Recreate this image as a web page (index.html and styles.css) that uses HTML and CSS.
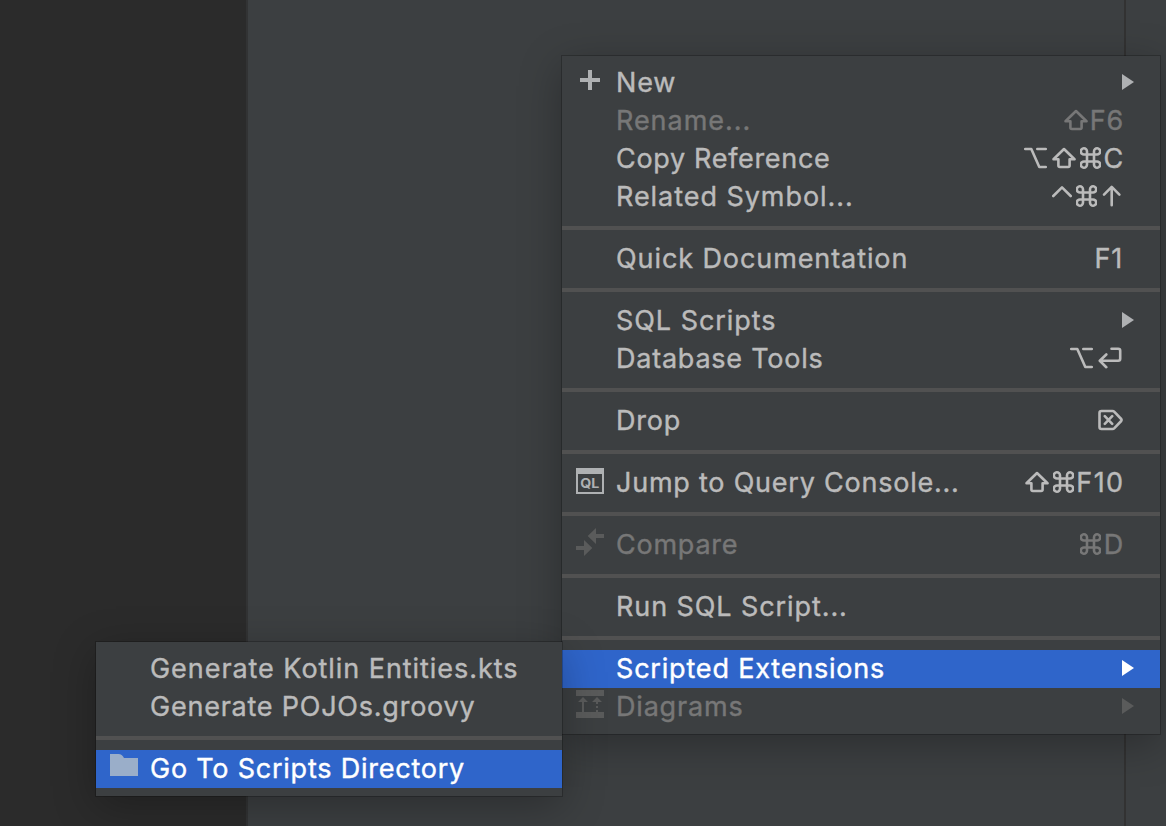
FILE: index.html
```html
<!DOCTYPE html>
<html lang="en">
<head>
<meta charset="utf-8">
<title>Database context menu</title>
<link rel="stylesheet" href="styles.css">
</head>
<body>
<svg class="defs" width="0" height="0" aria-hidden="true">
  <symbol id="shift" viewBox="0 0 24 22"><path d="M12 2 22.5 12.3H17.6V18.5Q17.6 20 16.1 20H7.9Q6.4 20 6.4 18.5V12.3H1.5Z"/></symbol>
  <symbol id="cmd" viewBox="0 0 21 22"><path d="M7 7.5H14V14.5H7ZM7 7.5H4.2A3.1 3.1 0 1 1 7 4.4ZM14 7.5V4.4A3.1 3.1 0 1 1 16.8 7.5ZM7 14.5V17.6A3.1 3.1 0 1 1 4.2 14.5ZM14 14.5H16.8A3.1 3.1 0 1 1 14 17.6Z"/></symbol>
  <symbol id="opt" viewBox="0 0 23 22"><path d="M1.2 2H7.3L15.3 20H21.8M13.3 2H21.8"/></symbol>
  <symbol id="ctrl" viewBox="0 0 20 22"><path d="M1.3 11 10 2.4 18.7 11"/></symbol>
  <symbol id="up" viewBox="0 0 20 22"><path d="M9.7 20.3V2M2 9.6 9.7 1.9 17.4 9.6"/></symbol>
  <symbol id="ret" viewBox="0 0 24 22"><path d="M13.5 1.7H20.2Q22.2 1.7 22.2 3.7V11.8Q22.2 13.8 20.2 13.8H2.2M8.3 7.5 1.8 13.8 8.3 20.2"/></symbol>
  <symbol id="del" viewBox="0 0 25 22"><path d="M3.5 2H14.5Q15.6 2 16.4 2.8L23.2 10Q23.9 11 23.2 12L16.4 19.2Q15.6 20 14.5 20H3.5Q1.5 20 1.5 18V4Q1.5 2 3.5 2ZM6.8 7.2 14.2 14.8M14.2 7.2 6.8 14.8"/></symbol>
  <symbol id="tri" viewBox="0 0 12 16"><polygon points="0,0 12,8 0,16"/></symbol>
</svg>
<div class="window">
  <div class="editor"></div>
  <div class="panel"></div>
  <div class="gutter"></div>

  <div class="menu main">
    <div class="item"><svg class="icon" viewBox="0 0 28 28"><path d="M12 4h4v8h8v4h-8v8h-4v-8H4v-4h8z"/></svg><span class="label snug">New</span><svg class="arrow"><use href="#tri"/></svg></div>
    <div class="item off"><span class="label wide">Rename...</span><span class="keys"><svg class="k shift"><use href="#shift"/></svg><b class="near">F6</b></span></div>
    <div class="item"><span class="label tight">Copy Reference</span><span class="keys"><svg class="k opt"><use href="#opt"/></svg><svg class="k shift"><use href="#shift"/></svg><svg class="k cmd"><use href="#cmd"/></svg><b>C</b></span></div>
    <div class="item"><span class="label wide">Related Symbol...</span><span class="keys inset"><svg class="k ctrl"><use href="#ctrl"/></svg><svg class="k cmd"><use href="#cmd"/></svg><svg class="k up"><use href="#up"/></svg></span></div>
    <div class="sep"></div>
    <div class="item"><span class="label mid">Quick Documentation</span><span class="keys inset"><b>F1</b></span></div>
    <div class="sep"></div>
    <div class="item"><span class="label wide">SQL Scripts</span><svg class="arrow"><use href="#tri"/></svg></div>
    <div class="item"><span class="label">Database Tools</span><span class="keys inset"><svg class="k opt"><use href="#opt"/></svg><svg class="k ret"><use href="#ret"/></svg></span></div>
    <div class="sep"></div>
    <div class="item"><span class="label snug">Drop</span><span class="keys"><svg class="k del"><use href="#del"/></svg></span></div>
    <div class="sep"></div>
    <div class="item"><svg class="icon" viewBox="0 0 28 28"><path fill-rule="evenodd" d="M0 2h28v26H0zM2 8v18h24V8z"/><text class="ql" x="4.3" y="21.8" textLength="19" lengthAdjust="spacingAndGlyphs">QL</text></svg><span class="label">Jump to Query Console...</span><span class="keys"><svg class="k shift"><use href="#shift"/></svg><svg class="k cmd"><use href="#cmd"/></svg><b class="long">F10</b></span></div>
    <div class="sep"></div>
    <div class="item off"><svg class="icon" viewBox="0 0 28 28"><path d="M11.7 8 20 0v6h8v4h-8v6zM0 18h8v-6l8.3 8L8 28v-6H0z"/></svg><span class="label">Compare</span><span class="keys"><svg class="k cmd"><use href="#cmd"/></svg><b>D</b></span></div>
    <div class="sep"></div>
    <div class="item"><span class="label mid">Run SQL Script...</span></div>
    <div class="sep"></div>
    <div class="item on"><span class="label snug">Scripted Extensions</span><svg class="arrow"><use href="#tri"/></svg></div>
    <div class="item off"><svg class="icon" viewBox="0 0 28 28"><path d="M0 0h28v6H0zM0 22h28v6H0zM7 7l5 5H8v10H6V12H2zM21 7l5 5h-4v2h-2v-2h-4zM20 16h2v2h-2zM20 20h2v2h-2z"/></svg><span class="label snug">Diagrams</span><svg class="arrow"><use href="#tri"/></svg></div>
  </div>

  <div class="menu sub">
    <div class="item"><span class="label wide">Generate Kotlin Entities.kts</span></div>
    <div class="item"><span class="label">Generate POJOs.groovy</span></div>
    <div class="sep"></div>
    <div class="item on"><svg class="icon folder" viewBox="0 0 28 28"><path d="M0 2h8.5Q12 2 14 6H28V24H0z"/></svg><span class="label">Go To Scripts Directory</span></div>
  </div>
</div>
</body>
</html>
```
FILE: styles.css
```css
* { box-sizing: border-box; }
body { margin: 0; background: #3c3f41; font-family: Inter, "Liberation Sans", sans-serif; }
.defs { position: absolute; }
.window { position: relative; display: flex; width: 1166px; height: 826px; overflow: hidden; }
.editor { width: 248px; background: #2b2b2b; border-right: 2px solid #323334; }
.panel { flex: 1; background: #3c3f41; }
.gutter { width: 42px; background: #3c3f41; border-left: 2px solid #323232; }

.menu {
  position: absolute;
  padding: 8px 0;
  background: #3c3f41;
  box-shadow: 0 0 0 1px rgba(0, 0, 0, .22), 0 10px 40px rgba(0, 0, 0, .28);
}
.main { left: 562px; top: 56px; width: 598px; }
.sub { left: 96px; top: 642px; width: 466px; }
.sep { height: 4px; margin: 10px 0; background: #515151; }

.item {
  display: grid;
  grid-template-columns: 28px 1fr auto;
  column-gap: 12px;
  height: 38px;
  padding: 0 26px 0 14px;
  color: #bbb;
  fill: #afb1b3;
}
.item.off { color: #777; fill: #5a5b5b; }
.item.on { color: #fff; fill: #fff; background: #2f65ca; }
.icon { grid-column: 1; grid-row: 1; width: 28px; height: 28px; margin-top: 2px; }
.icon.folder { fill: #9aaec9; }
.ql { font: 700 13px Inter, sans-serif; }
.label {
  grid-column: 2;
  grid-row: 1;
  font-size: 27px;
  line-height: 37px;
  white-space: pre;
  letter-spacing: .77px;
  -webkit-text-stroke: .4px currentColor;
}
.label.tight { letter-spacing: .68px; }
.label.snug { letter-spacing: .81px; }
.label.mid { letter-spacing: .91px; }
.label.wide { letter-spacing: .95px; }
.arrow { grid-column: 3; grid-row: 1; width: 12px; height: 16px; margin-top: 10px; }
.keys { grid-column: 3; grid-row: 1; display: flex; gap: 4.5px; margin-right: 11.5px; height: 37px; }
.keys.inset { margin-right: 12.5px; }
.keys b {
  font-weight: 400;
  font-size: 27px;
  line-height: 37px;
  letter-spacing: .8px;
  margin-left: -2.2px;
  margin-right: -1.5px;
  -webkit-text-stroke: .4px currentColor;
}
.keys b.near { margin-left: -3.2px; }
.keys b.long { letter-spacing: 1.4px; margin-right: -2px; }
.k {
  height: 22px;
  margin-top: 7px;
  fill: none;
  stroke: currentColor;
  stroke-width: 2.6;
  stroke-linecap: round;
  stroke-linejoin: round;
}
.shift { width: 24px; }
.cmd { width: 21px; }
.opt { width: 23px; }
.ctrl { width: 20px; }
.up { width: 20px; }
.ret { width: 24px; }
.del { width: 25px; }
```
